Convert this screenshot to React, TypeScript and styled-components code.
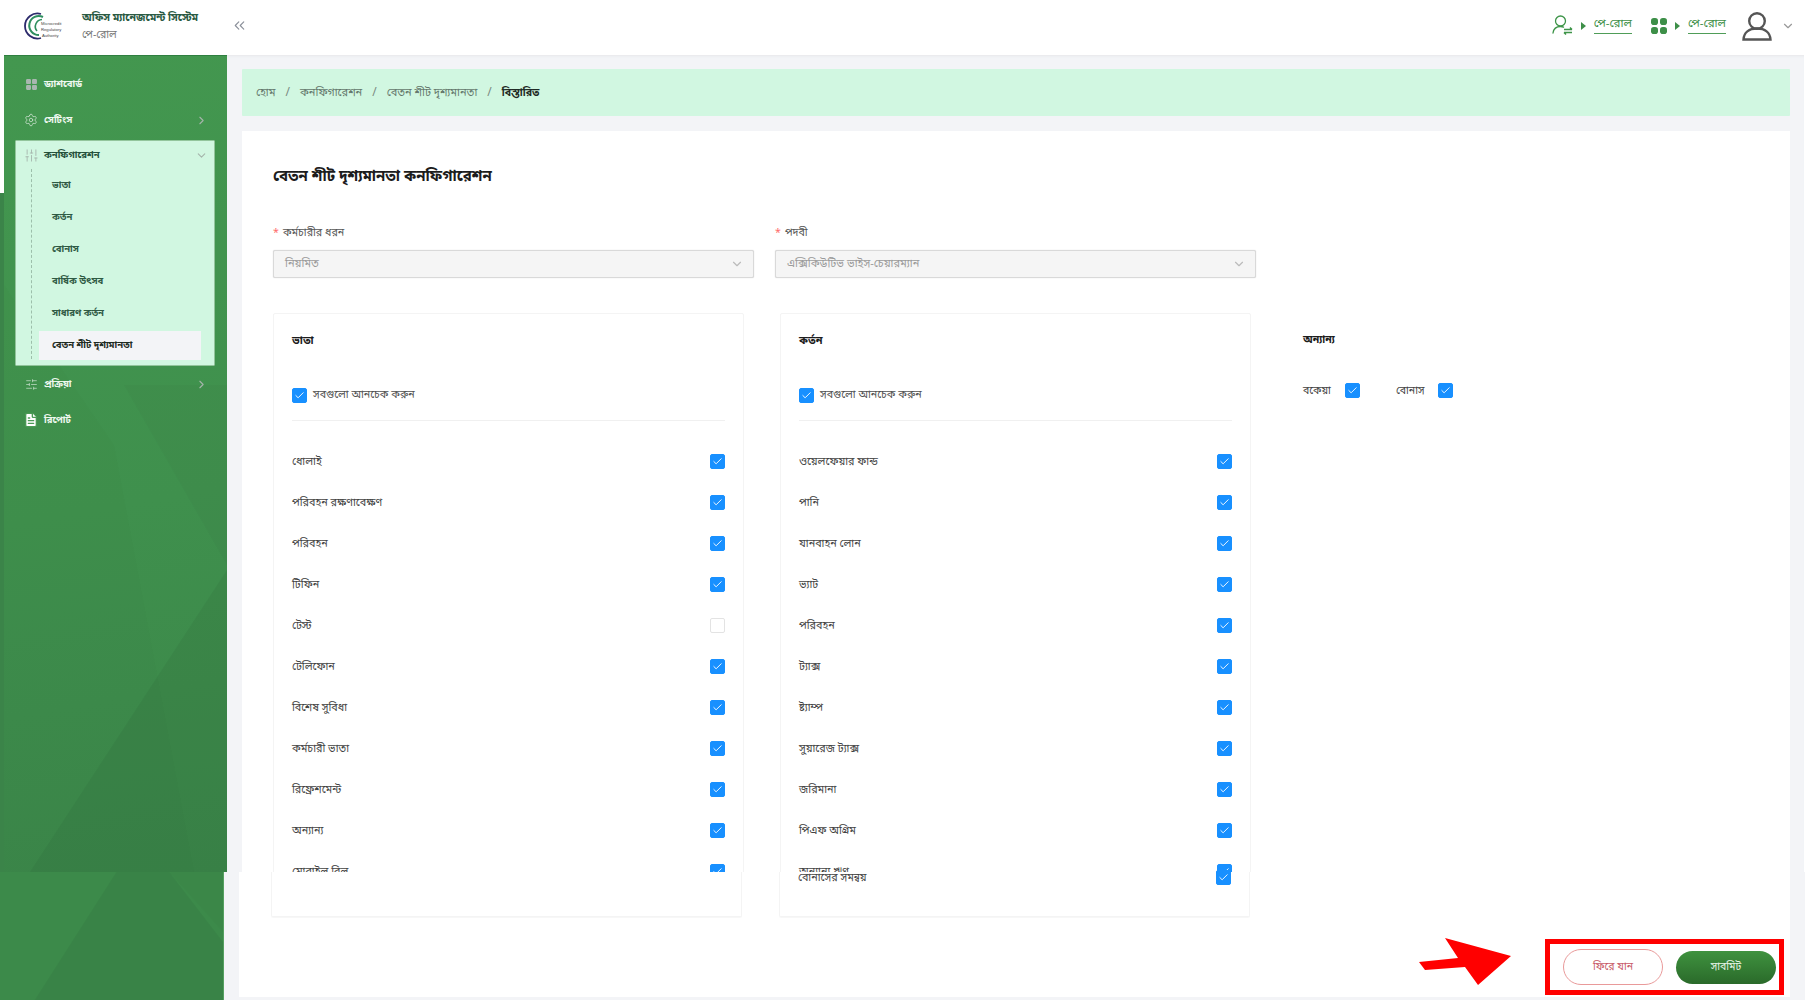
import styled, { createGlobalStyle } from 'styled-components'
import { Check, ChevronDown, ChevronRight, ChevronsLeft, FileText, LayoutGrid, Settings, SlidersHorizontal, SlidersVertical } from 'lucide-react'

const GlobalStyle = createGlobalStyle`
	html, body {
		margin: 0;
		padding: 0;
		background: #fff;
	}
	body {
		font-family: "Noto Sans Bengali", "Noto Sans", "Lohit Bengali", "Liberation Sans", sans-serif;
		color: #333;
	}
	* {
		box-sizing: border-box;
	}
`

const Page = styled.div`
	position: relative;
	width: 1811px;
	height: 1000px;
	overflow: hidden;
	background: #fff;
`

/* header */
const Header = styled.header`
	display: flex;
	align-items: center;
	height: 55px;
	padding: 0 16px 4px 24px;
`

const Brand = styled.div`
	display: flex;
	align-items: center;
	width: 146px;
	margin-left: 14px;
`

const BrandText = styled.div`
	display: flex;
	flex-direction: column;
	gap: 1px;
`

const BrandTitle = styled.div`
	font-size: 10.5px;
	line-height: 17px;
	font-weight: 700;
	color: #2a5a43;
	white-space: nowrap;
`

const BrandSub = styled.div`
	font-size: 10.5px;
	line-height: 14px;
	color: #777;
`

const CollapseBtn = styled.div`
	display: flex;
	color: #8a8f99;
	margin-left: 3px;
`

const HeaderRight = styled.div`
	margin-left: auto;
	display: flex;
	align-items: center;
`

const Crumb = styled.div`
	display: flex;
	align-items: center;
	gap: 8px;
	margin-right: 19px;
`

const CrumbLink = styled.span`
	font-size: 11.5px;
	line-height: 15px;
	color: #3d8f48;
	border-bottom: 1.5px solid #4f9d58;
	padding-bottom: 1px;
`

const Avatar = styled.div`
	display: flex;
	align-items: center;
	gap: 9px;
	margin-left: -3px;
	color: #555;
`

/* top slice of the page */
const Upper = styled.div`
	display: flex;
	height: 817px;
	overflow: hidden;
`

const Edge = styled.div`
	width: 4px;
	flex: none;
	background: linear-gradient(#fff 0, #fff 138px, #3b8449 138px, #3b8449 100%);
`

const Sidebar = styled.aside`
	position: relative;
	flex: none;
	width: 223px;
	padding-top: 11px;
	background: linear-gradient(170deg, #43974f 0%, #3f904d 55%, #3b8649 100%);
	overflow: hidden;
	box-shadow: inset 0 1px 0 #2f7f40;
`

const SidebarArt = styled.svg`
	position: absolute;
	left: 0;
	top: 0;
	width: 100%;
	height: 100%;
`

const NavList = styled.nav`
	position: relative;
	display: flex;
	flex-direction: column;
`

const NavItem = styled.div`
	display: flex;
	align-items: center;
	height: 36px;
	padding: 0 19px 0 19px;
	font-size: 9.5px;
	font-weight: 700;
	color: #eef8ef;
`

const NavIcon = styled.span<{ $color?: string }>`
	display: flex;
	justify-content: center;
	width: 16px;
	margin-right: 5px;
	color: ${p => p.$color || '#cfe3d2'};
`

const NavLabel = styled.span`
	flex: 1;
`

const NavArrow = styled.span`
	display: flex;
	color: #a5b5ab;
`

const NavPanel = styled.div`
	margin: 3px 13px 1px 12px;
	height: 224px;
	background: #d1f7e1;
	box-shadow: 0 0 0 0.5px #e4f5ea;
`

const PanelHead = styled.div`
	display: flex;
	align-items: center;
	height: 28px;
	padding: 0 6px 0 7px;
	font-size: 9.5px;
	font-weight: 700;
	color: #24503a;
`

const SubList = styled.div`
	margin-left: 15px;
	padding-left: 7px;
	border-left: 1px dashed #9dbfab;
	margin-right: 13px;
	height: 190px;
	padding-top: 1px;
`

const SubItem = styled.div<{ $active?: boolean }>`
	display: flex;
	align-items: center;
	padding-left: 13px;
	font-size: 9.5px;
	font-weight: 700;
	color: ${p => (p.$active ? '#1c2a22' : '#2f5a44')};
	background: ${p => (p.$active ? '#f3f4f7' : 'transparent')};
	height: ${p => (p.$active ? '29px' : '31.8px')};
	margin-top: ${p => (p.$active ? '2px' : '0')};
`

const Main = styled.main`
	flex: 1;
	display: flex;
	flex-direction: column;
	gap: 15px;
	padding: 14px 0 0 15px;
	margin-right: 7px;
	background: #f3f4f7;
	box-shadow: inset 0 3px 3px -2px #e6e7ea;
`

const Breadcrumb = styled.div`
	display: flex;
	align-items: center;
	flex: none;
	height: 47px;
	margin-right: 14px;
	padding-left: 14px;
	background: #d1f7e1;
	border-radius: 1px;
	font-size: 11px;
	color: #64776c;
`

const BreadSep = styled.span`
	margin: 0 10px;
	font-size: 12px;
	color: #7b8a81;
`

const BreadCurrent = styled.span`
	font-size: 10.5px;
	font-weight: 700;
	color: #1f2a24;
`

const Sheet = styled.section`
	flex: 1;
	margin-right: 14px;
	background: #fff;
	padding: 31px 31px 0 31px;
`

const Title = styled.h1`
	margin: 0;
	font-size: 15px;
	line-height: 30px;
	font-weight: 700;
	color: #1c1c1c;
`

const FormRow = styled.div`
	display: flex;
	gap: 21px;
	margin-top: 32px;
`

const Field = styled.div`
	width: 481px;
`

const FieldLabel = styled.label`
	display: block;
	font-size: 10.7px;
	line-height: 18px;
	color: #555;
	margin-bottom: 8px;
`

const Star = styled.span`
	color: #ff6b6b;
	margin-right: 4px;
`

const SelectBox = styled.div`
	display: flex;
	align-items: center;
	justify-content: space-between;
	height: 28px;
	padding: 0 9px 0 11px;
	background: #f5f5f5;
	border: 1px solid #d9d9d9;
	border-radius: 2px;
	box-shadow: 0 0 1px #c5c5c5;
	font-size: 11px;
	color: #9a9a9a;
`

const Columns = styled.div`
	display: flex;
	margin-top: 35px;
`

const Panel = styled.div<{ $gap?: number }>`
	flex: none;
	width: 471px;
	height: 620px;
	margin-right: ${p => p.$gap || 0}px;
	padding: 17px 18px 0 18px;
	border: 1px solid #f4f4f4;
	border-radius: 2px;
`

const PanelTitle = styled.h3`
	margin: 0;
	font-size: 11px;
	line-height: 20px;
	font-weight: 700;
	color: #1c1c1c;
`

const SelectAll = styled.div`
	display: flex;
	align-items: center;
	gap: 6px;
	margin-top: 33px;
	height: 22px;
	font-size: 10.7px;
	color: #505050;
`

const Divider = styled.div`
	height: 1px;
	margin-top: 14px;
	margin-bottom: 20px;
	background: #f0f0f0;
`

const Row = styled.div`
	display: flex;
	align-items: center;
	justify-content: space-between;
	height: 41px;
	font-size: 10.8px;
	color: #424242;
`

const Box = styled.span<{ $off?: boolean }>`
	display: inline-flex;
	align-items: center;
	justify-content: center;
	flex: none;
	width: 15px;
	height: 15px;
	border-radius: 2px;
	color: #fff;
	background: ${p => (p.$off ? '#fff' : '#1890ff')};
	border: 1px solid ${p => (p.$off ? '#e3e3e3' : '#1890ff')};
`

const OtherColumn = styled.div`
	padding-top: 17px;
`

const OtherTitle = styled(PanelTitle)`
	font-size: 10.5px;
`

const OtherRow = styled.div`
	display: flex;
	align-items: center;
	margin-top: 33px;
	font-size: 10.5px;
	color: #424242;
`

const OtherLabel = styled.span`
	width: 42px;
`

const OtherGap = styled.span`
	width: 36px;
`

/* bottom slice, sits about three pixels further left */
const Lower = styled.div`
	display: flex;
	height: 128px;
`

const LowerSide = styled.div`
	position: relative;
	flex: none;
	width: 224px;
	background: #3c8a4a;
	border-right: 1px solid #55a060;
`

const LowerMain = styled.div`
	flex: none;
	width: 1581px;
	padding: 0 15px 3px 15px;
	background: #f3f4f7;
`

const LowerSheet = styled.div`
	display: flex;
	flex-direction: column;
	height: 100%;
	padding: 0 0 0 32px;
	background: #fff;
`

const LowerCards = styled.div`
	display: flex;
	gap: 37px;
	flex: none;
`

const LowerCard = styled.div`
	width: 471px;
	height: 45px;
	padding: 0 18px;
	border: 1px solid #f4f4f4;
	border-top: none;
	border-radius: 0 0 2px 2px;
	box-shadow: 0 1px 1px #f7f7f7;
`

const OverlapRow = styled(Row)`
	margin-top: -15px;
`

const Actions = styled.div`
	display: flex;
	align-items: center;
	gap: 13px;
	width: 239px;
	height: 56px;
	margin: 22px 6px 0 auto;
	padding-left: 13px;
	border: 5px solid #f00;
`

const BackBtn = styled.button`
	width: 100px;
	height: 36px;
	border: 1px solid #e99a9a;
	border-radius: 18px;
	background: #fff;
	font: inherit;
	font-size: 10.5px;
	color: #c85a68;
	padding: 0;
`

const SubmitBtn = styled.button`
	width: 100px;
	height: 33px;
	border: none;
	border-radius: 17px;
	background: linear-gradient(#3f923f, #2a6a2a);
	font: inherit;
	font-size: 10.5px;
	color: #e8f5e8;
	padding: 0;
`

const Pointer = styled.svg`
	position: absolute;
	left: 1415px;
	top: 934px;
`

const allowances = ['ধোলাই', 'পরিবহন রক্ষণাবেক্ষণ', 'পরিবহন', 'টিফিন', 'টেস্ট', 'টেলিফোন', 'বিশেষ সুবিধা', 'কর্মচারী ভাতা', 'রিফ্রেশমেন্ট', 'অন্যান্য', 'মোবাইল বিল']
const deductions = ['ওয়েলফেয়ার ফান্ড', 'পানি', 'যানবাহন লোন', 'ভ্যাট', 'পরিবহন', 'ট্যাক্স', 'ষ্ট্যাম্প', 'সুয়ারেজ ট্যাক্স', 'জরিমানা', 'পিএফ অগ্রিম', 'অন্যান্য ঋণ']
const subMenu = ['ভাতা', 'কর্তন', 'বোনাস', 'বার্ষিক উৎসব', 'সাধারণ কর্তন']

const Tick = ({ off }: { off?: boolean }) => (
	<Box $off={off}>
		{!off && <Check size={11} strokeWidth={2} />}
	</Box>
)

const Logo = () => (
	<svg width="44" height="32" viewBox="0 0 44 32">
		<path d="M17 4 A12.5 12.5 0 1 0 17 28" fill="none" stroke="#2c2a6b" strokeWidth="1.8" />
		<path d="M19 7 A9.5 9.5 0 1 0 15 25" fill="none" stroke="#2f8f5f" strokeWidth="2" />
		<path d="M18 9.5 A7 7 0 0 0 13 21" fill="none" stroke="#2f8f5f" strokeWidth="1.6" />
		<text x="17" y="15" fontSize="4.2" fontFamily="Liberation Sans" fill="#444">Microcredit</text>
		<text x="17" y="21" fontSize="4.2" fontFamily="Liberation Sans" fill="#444">Regulatory</text>
		<text x="18" y="27" fontSize="4.2" fontFamily="Liberation Sans" fill="#444">Authority</text>
	</svg>
)

const UserSwitch = () => (
	<svg width="21" height="21" viewBox="0 0 21 21" fill="none" stroke="#3d9448" strokeWidth="1.3">
		<circle cx="8.5" cy="6" r="5" />
		<path d="M1 18c.6-4 3-6.5 7.5-6.5 1.2 0 2.2.2 3 .6" strokeLinecap="round" />
		<path d="M12 14.5h8M18 12.5l2 2M12 17.5h8M14 19.5l-2-2" strokeWidth="1.5" />
	</svg>
)

const Petals = () => (
	<svg width="16" height="16" viewBox="0 0 16 16" fill="#3d8f48">
		<rect x="0" y="0" width="7" height="7" rx="2.8" />
		<rect x="9" y="0" width="7" height="7" rx="2.8" />
		<rect x="0" y="9" width="7" height="7" rx="2.8" />
		<rect x="9" y="9" width="7" height="7" rx="2.8" />
	</svg>
)

const Caret = () => (
	<svg width="5" height="8" viewBox="0 0 5 8" fill="#3d8f48">
		<path d="M0 0l5 4-5 4z" />
	</svg>
)

const Person = () => (
	<svg width="30" height="30" viewBox="0 0 30 30" fill="none" stroke="#555" strokeWidth="2.4">
		<circle cx="15" cy="10" r="7.8" />
		<path d="M1.5 28.5c.4-7 5.5-11 13.5-11s13 4 13.5 11z" />
	</svg>
)

const App = () => {
	return (
		<Page>
			<GlobalStyle />
			<Header>
				<Logo />
				<Brand>
					<BrandText>
						<BrandTitle>অফিস ম্যানেজমেন্ট সিস্টেম</BrandTitle>
						<BrandSub>পে-রোল</BrandSub>
					</BrandText>
				</Brand>
				<CollapseBtn>
					<ChevronsLeft size={17} strokeWidth={1.6} />
				</CollapseBtn>
				<HeaderRight>
					<Crumb>
						<UserSwitch />
						<Caret />
						<CrumbLink>পে-রোল</CrumbLink>
					</Crumb>
					<Crumb>
						<Petals />
						<Caret />
						<CrumbLink>পে-রোল</CrumbLink>
					</Crumb>
					<Avatar>
						<Person />
						<ChevronDown size={14} color="#999" />
					</Avatar>
				</HeaderRight>
			</Header>

			<Upper>
				<Edge />
				<Sidebar>
					<SidebarArt viewBox="0 0 223 817" preserveAspectRatio="none">
						<polygon points="223,515 26,817 223,817" fill="#2c6238" opacity="0.16" />
						<polygon points="0,230 110,390 190,817 0,817" fill="#2f6b3c" opacity="0.04" />
						<polygon points="120,330 223,330 223,510" fill="#2f6b3c" opacity="0.08" />
					</SidebarArt>
					<NavList>
						<NavItem>
							<NavIcon $color="#a9b7b0"><LayoutGrid size={13} fill="#a9b7b0" /></NavIcon>
							<NavLabel>ড্যাশবোর্ড</NavLabel>
						</NavItem>
						<NavItem>
							<NavIcon><Settings size={14} strokeWidth={1.3} /></NavIcon>
							<NavLabel>সেটিংস</NavLabel>
							<NavArrow><ChevronRight size={13} /></NavArrow>
						</NavItem>
						<NavPanel>
							<PanelHead>
								<NavIcon $color="#a5b5ab"><SlidersVertical size={15} strokeWidth={1.4} /></NavIcon>
								<NavLabel>কনফিগারেশন</NavLabel>
								<NavArrow><ChevronDown size={13} /></NavArrow>
							</PanelHead>
							<SubList>
								{subMenu.map(s => (
									<SubItem key={s}>{s}</SubItem>
								))}
								<SubItem $active>বেতন শীট দৃশ্যমানতা</SubItem>
							</SubList>
						</NavPanel>
						<NavItem>
							<NavIcon><SlidersHorizontal size={13} strokeWidth={1.3} /></NavIcon>
							<NavLabel>প্রক্রিয়া</NavLabel>
							<NavArrow><ChevronRight size={13} /></NavArrow>
						</NavItem>
						<NavItem>
							<NavIcon $color="#fff"><FileText size={16} fill="#fff" stroke="#4a9a55" /></NavIcon>
							<NavLabel>রিপোর্ট</NavLabel>
						</NavItem>
					</NavList>
				</Sidebar>
				<Main>
					<Breadcrumb>
						<span>হোম</span>
						<BreadSep>/</BreadSep>
						<span>কনফিগারেশন</span>
						<BreadSep>/</BreadSep>
						<span>বেতন শীট দৃশ্যমানতা</span>
						<BreadSep>/</BreadSep>
						<BreadCurrent>বিস্তারিত</BreadCurrent>
					</Breadcrumb>
					<Sheet>
						<Title>বেতন শীট দৃশ্যমানতা কনফিগারেশন</Title>
						<FormRow>
							<Field>
								<FieldLabel><Star>*</Star>কর্মচারীর ধরন</FieldLabel>
								<SelectBox>
									নিয়মিত
									<ChevronDown size={14} color="#bbb" />
								</SelectBox>
							</Field>
							<Field>
								<FieldLabel><Star>*</Star>পদবী</FieldLabel>
								<SelectBox>
									এক্সিকিউটিভ ভাইস-চেয়ারম্যান
									<ChevronDown size={14} color="#bbb" />
								</SelectBox>
							</Field>
						</FormRow>
						<Columns>
							<Panel $gap={36}>
								<PanelTitle>ভাতা</PanelTitle>
								<SelectAll><Tick />সবগুলো আনচেক করুন</SelectAll>
								<Divider />
								{allowances.map(a => (
									<Row key={a}>{a}<Tick off={a === 'টেস্ট'} /></Row>
								))}
							</Panel>
							<Panel $gap={52}>
								<PanelTitle>কর্তন</PanelTitle>
								<SelectAll><Tick />সবগুলো আনচেক করুন</SelectAll>
								<Divider />
								{deductions.map(d => (
									<Row key={d}>{d}<Tick /></Row>
								))}
							</Panel>
							<OtherColumn>
								<OtherTitle>অন্যান্য</OtherTitle>
								<OtherRow>
									<OtherLabel>বকেয়া</OtherLabel>
									<Tick />
									<OtherGap />
									<OtherLabel>বোনাস</OtherLabel>
									<Tick />
								</OtherRow>
							</OtherColumn>
						</Columns>
					</Sheet>
				</Main>
			</Upper>

			<Lower>
				<LowerSide>
					<SidebarArt viewBox="0 0 224 128" preserveAspectRatio="none">
						<polygon points="117,0 170,0 224,70 224,128 35,128" fill="#2c6238" opacity="0.16" />
						<polygon points="170,0 224,0 224,60" fill="#2c6238" opacity="0.06" />
					</SidebarArt>
				</LowerSide>
				<LowerMain>
					<LowerSheet>
						<LowerCards>
							<LowerCard />
							<LowerCard>
								<OverlapRow>বোনাসের সমন্বয়<Tick /></OverlapRow>
							</LowerCard>
						</LowerCards>
						<Actions>
							<BackBtn>ফিরে যান</BackBtn>
							<SubmitBtn>সাবমিট</SubmitBtn>
						</Actions>
					</LowerSheet>
				</LowerMain>
			</Lower>

			<Pointer width="100" height="55" viewBox="1415 934 100 55">
				<polygon points="1419,962 1458,958 1445,938 1511,956 1478,985 1465,967 1425,970" fill="#f00" />
			</Pointer>
		</Page>
	)
}

export default App
